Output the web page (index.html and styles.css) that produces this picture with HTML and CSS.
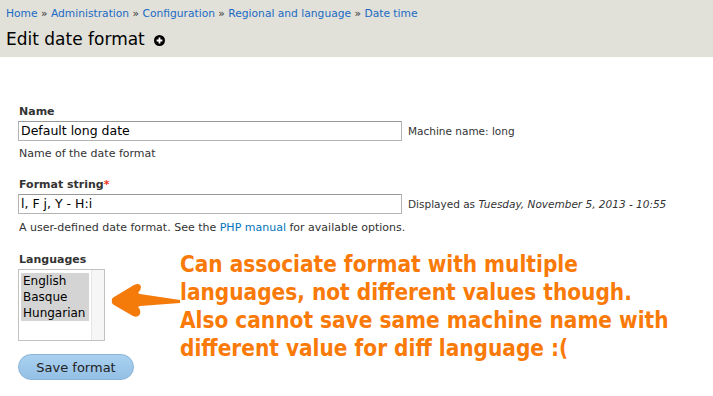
FILE: index.html
```html
<!DOCTYPE html>
<html>
<head>
<meta charset="utf-8">
<link rel="stylesheet" href="styles.css">
</head>
<body>
<div class="header">
  <div class="crumbs"><a href="#">Home</a> » <a href="#">Administration</a> » <a href="#">Configuration</a> » <a href="#">Regional and language</a> » <a href="#">Date time</a></div>
  <h1 class="title">Edit date format <span class="plus"><svg width="11" height="11" viewBox="0 0 11 11"><circle cx="5.5" cy="5.5" r="5.5" fill="#000"/><path d="M5.5 2.6v5.8M2.6 5.5h5.8" stroke="#fff" stroke-width="1.8"/></svg></span></h1>
</div>
<div class="content">
  <div class="field">
    <div class="label">Name</div>
    <div class="row"><div class="input">Default long date</div><span class="suffix">Machine name: long</span></div>
    <div class="desc">Name of the date format</div>
  </div>
  <div class="field">
    <div class="label">Format string<span class="req">*</span></div>
    <div class="row"><div class="input">l, F j, Y - H:i</div><span class="suffix">Displayed as <em>Tuesday, November 5, 2013 - 10:55</em></span></div>
    <div class="desc desc2">A user-defined date format. See the <a href="#">PHP manual</a> for available options.</div>
  </div>
  <div class="field">
    <div class="label">Languages</div>
    <div class="select">
      <div class="options">
        <div class="opt">English</div>
        <div class="opt">Basque</div>
        <div class="opt">Hungarian</div>
      </div>
      <div class="scroll"></div>
    </div>
  </div>
  <button class="btn">Save format</button>
  <div class="note">
    <svg class="arrow" width="72" height="40" viewBox="0 0 72 40"><path d="M2 20 Q1 18 4 16 L24 4 Q30 1 31 6 Q31 9 28 12 L30 13 L70 19 L70 22 L30 25 L28 26 Q31 29 30 33 Q28 37 23 35 L4 24 Q1 22 2 20 Z" fill="#f47a0a"/></svg>
    <p class="note-text">Can associate format with multiple<br>languages, not different values though.<br>Also cannot save same machine name with<br>different value for diff language :(</p>
  </div>
</div>
</body>
</html>
```
FILE: styles.css
```css
html, body { margin: 0; padding: 0; background: #fff; }
body { font-family: "DejaVu Sans", "Liberation Sans", sans-serif; font-size: 11px; color: #333; width: 713px; height: 396px; overflow: hidden; position: relative; }
a { color: #0074bd; text-decoration: none; }
.header { background: #e1e0d9; height: 57px; padding: 0 6px; box-sizing: border-box; padding-top: 7px; }
.crumbs { font-size: 10.7px; color: #333; line-height: 14px; }
.crumbs a { color: #1a6bc4; }
.title { margin: 8px 0 0; font-weight: normal; font-size: 17px; line-height: 20px; color: #000; display: flex; align-items: center; gap: 9px; }
.plus { display: inline-flex; margin-top: 2px; }
.content { padding: 48px 0 0 18px; }
.field { margin-bottom: 17px; }
.label { font-weight: bold; font-size: 11px; color: #333; line-height: 14px; padding-left: 1px; margin-bottom: 2px; }
.req { color: #e32; }
.row { display: flex; align-items: center; gap: 6px; }
.input { width: 378px; height: 18px; border: 1px solid #b4b4b4; border-top-color: #999; font-size: 12.5px; line-height: 18px; padding: 0 2px; color: #000; }
.suffix { font-size: 10.5px; color: #333; }
.desc { margin-top: 6px; line-height: 14px; padding-left: 1px; }
.desc2 { margin-top: 7px; margin-bottom: 18px; }
.select { width: 85px; height: 70px; border: 1px solid #c2c2c2; display: flex; }
.options { flex: 1; padding: 3px 2px; }
.opt { background: #d4d4d4; font-size: 12px; line-height: 16px; padding-left: 2px; color: #000; }
.scroll { width: 12px; border-left: 1px solid #e6e6e6; background: #f6f6f6; }
.btn { margin-top: -4px; width: 116px; height: 26px; border-radius: 13px; border: 1px solid #8ab3d6; background: linear-gradient(#a9d0ef, #94c0e6); font-family: "DejaVu Sans", sans-serif; font-size: 13px; color: #222; padding: 0; }
.note { position: absolute; left: 110px; top: 250px; width: 600px; }
.arrow { position: absolute; left: 0; top: 31px; }
.note-text { margin: 0 0 0 70px; font-family: "DejaVu Sans Condensed", "Liberation Sans", sans-serif; font-weight: bold; font-size: 22.4px; line-height: 28px; color: #f97a08; }
```
